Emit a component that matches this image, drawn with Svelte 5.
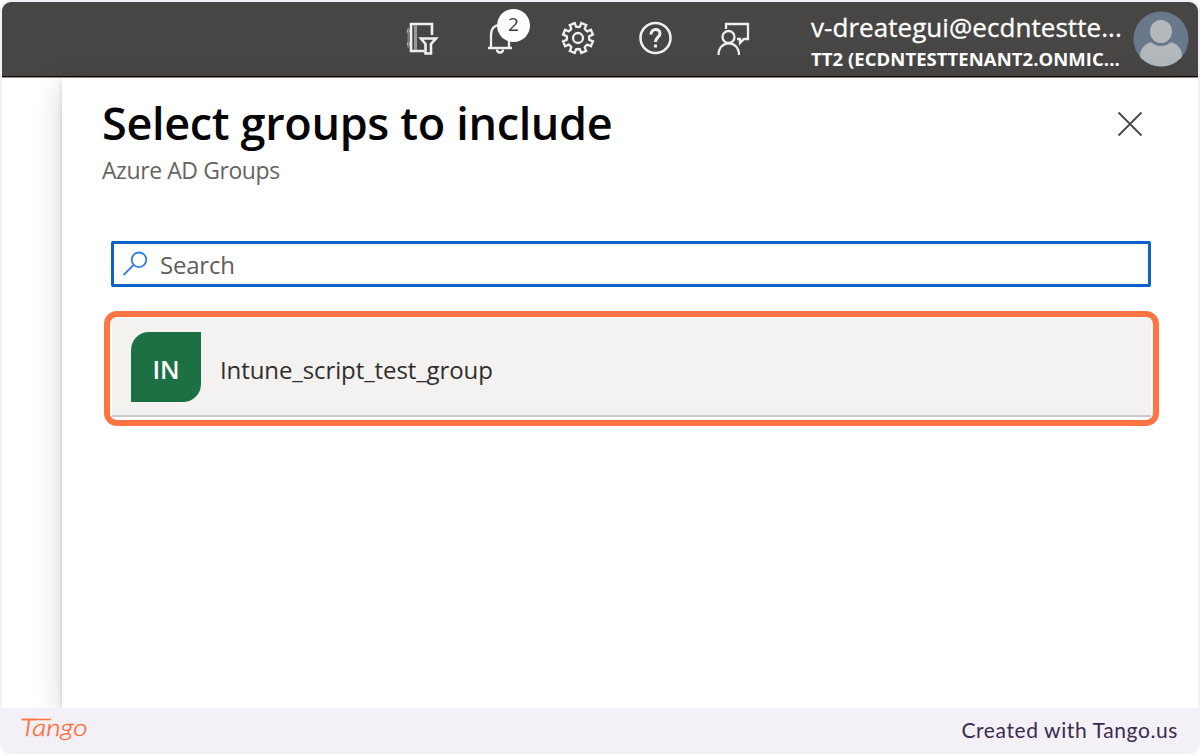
<script>
  const groups = [{ initials: 'IN', name: 'Intune_script_test_group' }];
  const teeth = Array.from({ length: 8 }, (_, i) => i * 45);
</script>

<div class="frame">
  <div class="window">
    <header>
      <nav>
        <svg class="icon" width="34" height="34" viewBox="0 0 34 34">
          <path d="M27 14V3H6V30H19" stroke-width="2.6" />
          <path d="M10.500 4V29" stroke="#9a9896" stroke-width="3" />
          <path d="M2 10H7M2 23H7" stroke-width="3" />
          <path d="M3.500 7V27" stroke="#7d7b79" stroke-width="2" />
          <path d="M16 17.500H31L26 23V32.500H20.500V23Z" fill="#484644" stroke-width="2.6" />
        </svg>
        <div class="bell">
          <svg class="icon" width="34" height="34" viewBox="0 0 34 34">
            <path d="M8 26V14C8 7 12 4 17 4S26 8 26 14V26" />
            <path d="M5 27H29" stroke-width="2.600" />
            <path d="M14 28.500C14 32.500 20 32.500 20 28.500" />
          </svg>
          <span class="badge">2</span>
        </div>
        <svg class="icon" width="34" height="34" viewBox="-17 -17 34 34">
          <path d={teeth.map((a) => {
            const p = (r, d) => {
              const t = ((a + d) * Math.PI) / 180;
              return `${(r * Math.cos(t)).toFixed(2)} ${(r * Math.sin(t)).toFixed(2)}`;
            };
            return `${a ? 'L' : 'M'}${p(11.5, -13)}L${p(15.3, -10)}L${p(15.3, 10)}L${p(11.5, 13)}L${p(11, 22.5)}`;
          }).join('') + 'Z'} transform="rotate(22.5)" />
          <circle r="5" />
        </svg>
        <svg class="icon" width="34" height="34" viewBox="0 0 34 34">
          <circle cx="16.500" cy="17" r="15" stroke-width="2.6" />
          <path d="M12 13.500C12 7 21 7 21 12.500C21 16 16.500 16.500 16.500 21" stroke-width="3" />
          <path d="M16.500 23.500V26.500" stroke-width="3" />
        </svg>
        <svg class="icon" width="34" height="34" viewBox="0 0 34 34">
          <path d="M9 8V3H31V18H27L23 22V18H20" />
          <circle cx="11.500" cy="16" r="6" />
          <path d="M1.500 34C1.500 18.500 22 18.500 22 34" />
        </svg>
      </nav>
      <div class="account">
        <div class="user">v-dreategui@ecdntestte...</div>
        <div class="tenant">TT2 (ECDNTESTTENANT2.ONMIC...</div>
      </div>
      <svg class="avatar" width="56" height="56" viewBox="0 0 56 56">
        <defs><clipPath id="disc"><circle cx="28" cy="28" r="27.500" /></clipPath></defs>
        <g clip-path="url(#disc)">
          <rect width="56" height="56" fill="#69788a" />
          <rect x="7" y="31" width="42" height="34" rx="14" fill="#b3b8bc" />
          <circle cx="28" cy="21" r="14" fill="#69788a" />
          <ellipse cx="28" cy="20.500" rx="11" ry="11.500" fill="#b3b8bc" />
        </g>
      </svg>
    </header>
    <div class="body">
      <main>
        <div class="heading">
          <div>
            <h1>Select groups to include</h1>
            <p>Azure AD Groups</p>
          </div>
          <svg class="close" width="26" height="26" viewBox="0 0 26 26">
            <path d="M1.500 1.500L24.500 24.500M24.500 1.500L1.500 24.500" />
          </svg>
        </div>
        <div class="search">
          <svg width="26" height="26" viewBox="0 0 26 26">
            <circle cx="16" cy="8.800" r="7.300" />
            <path d="M10.500 14L0.500 24" />
          </svg>
          <span>Search</span>
        </div>
        {#each groups as group}
          <div class="highlight">
            <div class="row">
              <div class="tile"><span>{group.initials}</span></div>
              <span class="name">{group.name}</span>
            </div>
          </div>
        {/each}
      </main>
    </div>
  </div>
  <footer>
    <svg class="logo" width="80" height="44" viewBox="0 0 80 44">
      <text x="0.5" y="27" textLength="67" lengthAdjust="spacingAndGlyphs">Tango</text>
      <path d="M2 10.500H31" />
    </svg>
    <span class="credit">Created with Tango.us</span>
  </footer>
</div>

<style>
  :global(body) { margin: 0; background: #fff; }
  * { box-sizing: border-box; }
  .frame {
    width: 1200px; height: 754px; padding: 2px 2px 0; border-radius: 10px;
    background: #f3f1f7; overflow: hidden; display: flex; flex-direction: column;
    font-family: "Open Sans", "Noto Sans", sans-serif;
  }
  .window { height: 706px; border-radius: 9px 9px 0 0; overflow: hidden; background: #fff; display: flex; flex-direction: column; }
  header {
    height: 76px; flex: none; background: #484644; border-bottom: 1px solid #96918e;
    box-shadow: inset 0 -1px #120b08; display: flex; align-items: flex-start; padding-left: 403px;
  }
  nav { display: flex; gap: 44px; padding-top: 19px; width: 406px; flex: none; }
  .icon { fill: none; stroke: #f0efee; stroke-width: 2.300; display: block; flex: none; }
  .bell { position: relative; }
  .badge {
    position: absolute; left: 14px; top: -12px; width: 33px; height: 33px; border-radius: 50%;
    background: #fff; color: #3d3b48; font-size: 19px; line-height: 31px; text-align: center;
  }
  .account { width: 322px; flex: none; color: #fff; white-space: nowrap; padding-top: 8px; }
  .user { font-size: 26px; line-height: 35px; letter-spacing: 0.05px; -webkit-text-stroke: .3px #fff; }
  .tenant { font-size: 18.500px; line-height: 27px; font-weight: 700; letter-spacing: 0.050px; }
  .avatar { margin-top: 9px; flex: none; }
  .body { flex: 1; padding-left: 60px; background: #fff; }
  main { height: 100%; background: #fff; box-shadow: 0 6px 28px rgba(0,0,0,.17), 0 2px 5px rgba(0,0,0,.13); padding: 15px 39px 0 40px; }
  .heading { display: flex; justify-content: space-between; padding-right: 16px; height: 147px; }
  h1 { margin: 0; font-size: 45px; line-height: 60px; font-weight: 570; color: #050505; white-space: nowrap; letter-spacing: -0.34px; }
  p { margin: 1px 0 0; font-size: 23px; line-height: 32px; color: #666462; letter-spacing: -0.42px; }
  .close { margin-top: 18px; fill: none; stroke: #494745; stroke-width: 1.800; }
  .search {
    width: 1040px; height: 46px; margin: 1px 0 0 9px; border: 3px solid #0c62cc; border-radius: 2px;
    display: flex; align-items: center; padding-left: 9px; gap: 11px; color: #605e5c; font-size: 24px; letter-spacing: -0.2px;
  }
  .search svg { fill: none; stroke: #2f82d8; stroke-width: 1.800; }
  .highlight { width: 1055px; height: 115px; margin: 24px 0 0 2px; border: 6px solid #ff7442; border-radius: 13px; padding: 1px 2px 2px; background: #fff; }
  .row { height: 99px; background: #f3f2f0; border-bottom: 2px solid #cac9c8; border-radius: 5px 0 0 0; display: flex; align-items: center; padding: 1px 0 0 19px; gap: 19px; }
  .tile { width: 70px; height: 70px; border-radius: 18px 0 18px 0; background: #1d7044; color: #fff; display: grid; place-items: center; font-size: 25px; font-weight: 600; }
  .tile span { transform: translateY(2px); }
  .name { color: #302e2d; font-size: 24px; line-height: 34px; padding-top: 5px; letter-spacing: -0.1px; }
  footer { flex: 1; display: flex; align-items: center; justify-content: space-between; padding: 0 20px 0 18px; }
  .logo text { font: italic 300 23px Lato, sans-serif; fill: #ff6a35; stroke: #ff6a35; stroke-width: .3; }
  .logo path { stroke: #ff7442; stroke-width: 1.700; }
  .credit { font-family: Lato, sans-serif; font-size: 21px; color: #3b2a51; letter-spacing: .6px; transform: translateY(-2px); }
</style>
